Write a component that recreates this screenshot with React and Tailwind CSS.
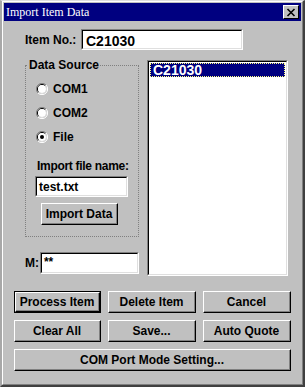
import React from "react";

const font = { fontFamily: '"Liberation Sans", Arial, sans-serif' };

function Btn({ children, w, def = false }) {
  return (
    <div
      className={`flex items-center justify-center h-[22px] bg-[#c0c0c0] text-[12px] font-bold text-black ${w} ${
        def ? "border border-black" : ""
      }`}
    >
      <div className="w-full h-full border-t border-l border-white border-r border-b border-r-black border-b-black">
        <div className="w-full h-full flex items-center justify-center border-r border-b border-[#808080]">
          {children}
        </div>
      </div>
    </div>
  );
}

function Field({ children, className }) {
  return (
    <div className={`border border-t-[#808080] border-l-[#808080] border-r-white border-b-white ${className}`}>
      <div className="w-full h-full bg-white border border-t-black border-l-black border-r-[#dfdfdf] border-b-[#dfdfdf] text-[12px] font-bold text-black leading-none">
        {children}
      </div>
    </div>
  );
}

function Radio({ checked, label }) {
  return (
    <div className="flex items-center gap-[5px] h-[14px]">
      <svg width="12" height="12" viewBox="0 0 12 12">
        <path d="M10 2 A5.5 5.5 0 0 0 2 10" stroke="#808080" fill="none" strokeWidth="1" />
        <path d="M9.2 2.8 A4.3 4.3 0 0 0 2.8 9.2" stroke="#000" fill="none" strokeWidth="1" />
        <circle cx="6" cy="6" r="4" fill="#fff" />
        <path d="M2 10 A5.5 5.5 0 0 0 10 2" stroke="#fff" fill="none" strokeWidth="1" />
        <path d="M2.8 9.2 A4.3 4.3 0 0 0 9.2 2.8" stroke="#dfdfdf" fill="none" strokeWidth="1" />
        {checked && <circle cx="6" cy="6" r="2" fill="#000" />}
      </svg>
      <span className="text-[12px] font-bold text-black">{label}</span>
    </div>
  );
}

export default function App() {
  return (
    <div style={font} className="w-[305px] h-[387px] bg-[#c0c0c0] relative overflow-hidden">
      <div className="w-full h-full border-l-[2px] border-t-[1px] border-r-[2px] border-b-[2px] border-l-[#a8a8a8] border-t-[#dfdfdf] border-r-[#404040] border-b-[#404040]">
        <div className="w-full h-full border border-l-white border-t-white border-r-[#808080] border-b-[#808080] px-[1px] pt-[1px]">
          {/* Title bar */}
          <div className="h-[18px] bg-[#000080] flex items-center justify-between pl-[2px] pr-[2px]">
            <span
              className="text-white text-[12px] leading-none"
              style={{ fontFamily: '"Liberation Serif", "Times New Roman", serif' }}
            >
              Import Item Data
            </span>
            <div className="w-[16px] h-[14px] bg-[#c0c0c0] border border-t-white border-l-white border-r-black border-b-black flex items-center justify-center">
              <svg width="10" height="9" viewBox="0 0 10 9">
                <path d="M1.5 1 L8.5 8 M8.5 1 L1.5 8" stroke="#000" strokeWidth="1.6" />
              </svg>
            </div>
          </div>

          {/* Item No row */}
          <div className="flex items-center mt-[8px] pl-[21px]">
            <span className="text-[12px] font-bold text-black w-[56px]">Item No.:</span>
            <Field className="w-[162px] h-[21px]">
              <div className="pl-[3px] pt-[3px] text-[14px]">C21030</div>
            </Field>
          </div>

          {/* Middle section */}
          <div className="flex mt-[10px] pl-[21px]">
            <div className="flex flex-col w-[114px]">
              <div className="relative mt-[5px] h-[172px] border border-dotted border-[#808080]">
                <span className="absolute -top-[8px] left-[2px] bg-[#c0c0c0] text-[12px] font-bold text-black leading-none px-[1px] pt-[1px]">
                  Data Source
                </span>
                <div className="flex flex-col gap-[10px] pl-[10px] pt-[16px]">
                  <Radio label="COM1" />
                  <Radio label="COM2" />
                  <Radio checked label="File" />
                </div>
                <div className="pl-[11px] mt-[16px] text-[12px] font-bold text-black leading-none tracking-[-0.3px]">
                  Import file name:
                </div>
                <div className="pl-[9px] mt-[4px]">
                  <Field className="w-[93px] h-[21px]">
                    <div className="pl-[2px] pt-[3px] text-[12px]">test.txt</div>
                  </Field>
                </div>
                <div className="pl-[15px] mt-[6px]">
                  <Btn w="w-[77px]">Import Data</Btn>
                </div>
              </div>
              <div className="flex items-center mt-[15px]">
                <span className="text-[12px] font-bold text-black w-[15px]">M:</span>
                <Field className="w-[100px] h-[22px]">
                  <div className="pl-[2px] pt-[2px] text-[12px]">**</div>
                </Field>
              </div>
            </div>

            {/* List box */}
            <div className="ml-[8px] w-[141px] h-[216px] border border-t-[#808080] border-l-[#808080] border-r-white border-b-white">
              <div className="w-full h-full bg-white border border-t-black border-l-black border-r-[#dfdfdf] border-b-[#dfdfdf] p-[1px]">
                <div className="h-[14px] bg-[#000080] border border-dotted border-[#ffff80] flex items-center pl-[2px]">
                  <span className="text-white text-[14px] font-bold leading-none">C21030</span>
                </div>
              </div>
            </div>
          </div>

          {/* Buttons */}
          <div className="flex flex-col gap-[7px] mt-[15px] pl-[10px]">
            <div className="flex gap-[7px]">
              <Btn w="w-[87px]" def>Process Item</Btn>
              <Btn w="w-[88px]">Delete Item</Btn>
              <Btn w="w-[88px]">Cancel</Btn>
            </div>
            <div className="flex gap-[7px]">
              <Btn w="w-[87px]">Clear All</Btn>
              <Btn w="w-[88px]">Save...</Btn>
              <Btn w="w-[88px]">Auto Quote</Btn>
            </div>
            <div className="flex">
              <Btn w="w-[277px]">COM Port Mode Setting...</Btn>
            </div>
          </div>
        </div>
      </div>
    </div>
  );
}
